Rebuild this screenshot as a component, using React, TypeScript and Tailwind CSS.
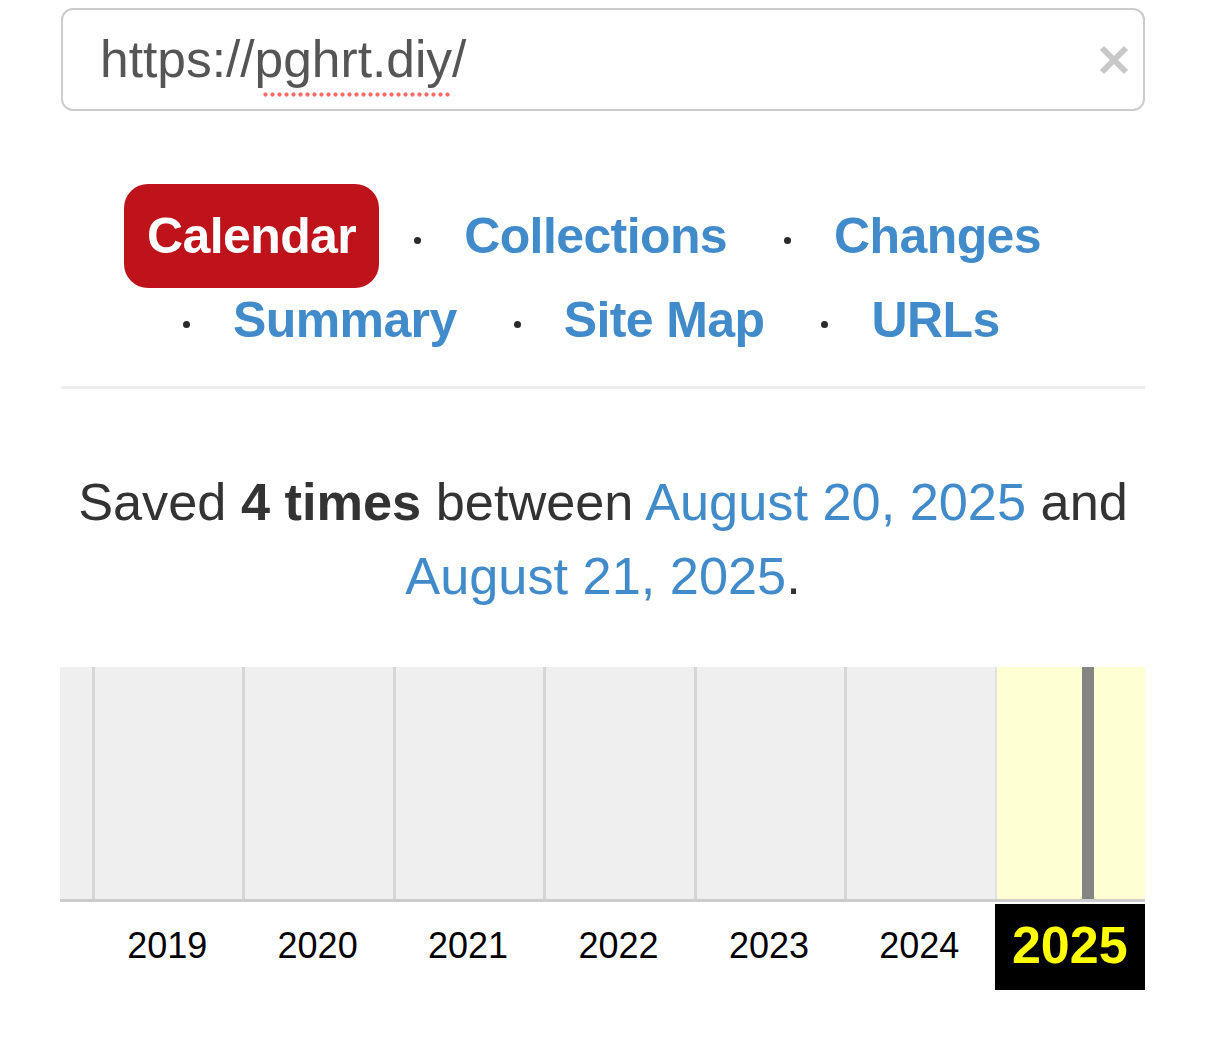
const LINK = "text-[#428bca]";

const YEARS = ["2019", "2020", "2021", "2022", "2023", "2024"];

function Dot({ className = "" }: { className?: string }) {
  return <span className={`block h-[7px] w-[7px] shrink-0 translate-y-[4px] rounded-full bg-[#2a2a2a] ${className}`} />;
}

function NavLink({ label }: { label: string }) {
  return <a className={`${LINK} ml-[43px] leading-none`}>{label}</a>;
}

export default function App() {
  return (
    <div className="min-h-screen bg-white px-[61px] pt-[8px] font-['Liberation_Sans',Arial,sans-serif]">
      {/* url box */}
      <div className="flex h-[103px] items-center rounded-[12px] border-2 border-[#cccccc] pl-[37px] pr-[14px]">
        <span className="flex-1 text-[51.5px] leading-none text-[#555]">
          https://
          <span className="relative">
            pghrt.diy
            <span className="absolute -bottom-[9px] left-[7px] right-[2px] h-[5px] bg-[radial-gradient(circle,#ff6b6b_1.8px,transparent_2.4px)] bg-[length:7px_5px] bg-repeat-x" />
          </span>
          /
        </span>
        <svg width="30" height="30" viewBox="0 0 30 30" className="shrink-0">
          <path d="M3 3 L27 27 M27 3 L3 27" stroke="#c8c8c8" strokeWidth="6" />
        </svg>
      </div>

      {/* nav */}
      <div className="mt-[73px] text-[50px] font-bold tracking-[-0.6px]">
        <div className="ml-[63px] flex h-[104px] items-center">
          <a className="flex h-[104px] items-center rounded-[24px] bg-[#be131a] px-[23px] leading-none text-white">Calendar</a>
          <Dot className="ml-[35px]" />
          <NavLink label="Collections" />
          <Dot className="ml-[57px]" />
          <NavLink label="Changes" />
        </div>
        <div className="ml-[122px] mt-[2px] flex h-[60px] items-center">
          <Dot />
          <NavLink label="Summary" />
          <Dot className="ml-[57px]" />
          <NavLink label="Site Map" />
          <Dot className="ml-[57px]" />
          <NavLink label="URLs" />
        </div>
      </div>

      <div className="mt-[36px] h-[3px] bg-[#eeeeee]" />

      {/* summary */}
      <p className="mt-[76px] text-center text-[52.3px] leading-[74px] text-[#333]">
        Saved <strong className="font-bold">4 times</strong> between{" "}
        <a className={LINK}>August 20, 2025</a> and{" "}
        <a className={LINK}>August 21, 2025</a>.
      </p>

      {/* year sparkline */}
      <div className="-ml-[1px] mt-[54px] w-[1085px]">
        <div className="grid h-[235px] grid-cols-[32px_repeat(7,1fr)] border-b-[3px] border-[#cccccc]">
          <div className="bg-[#efefef]" />
          {YEARS.map((y) => (
            <div key={y} className="border-l-[3px] border-[#d6d6d6] bg-[#efefef]" />
          ))}
          <div className="flex border-l-[2px] border-[#e2e2e2] bg-[#ffffd4] pl-[85px]">
            <div className="h-full w-[12px] bg-[#848484]" />
          </div>
        </div>
        <div className="grid grid-cols-[32px_repeat(7,1fr)] pt-[2px]">
          <div />
          {YEARS.map((y) => (
            <div key={y} className="flex h-[86px] items-center justify-center pb-[2px] text-[36px] leading-none text-black">
              {y}
            </div>
          ))}
          <div className="flex h-[86px] items-center justify-center bg-black pb-[4px] text-[52px] font-bold leading-none text-[#ffff00]">
            2025
          </div>
        </div>
      </div>
    </div>
  );
}
